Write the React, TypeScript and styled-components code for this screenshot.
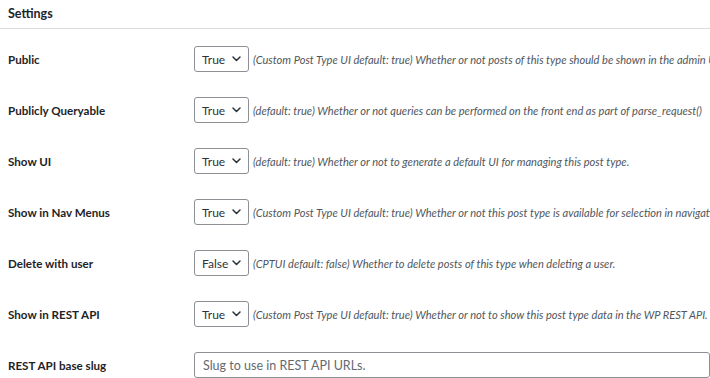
import React from 'react';
import styled, { createGlobalStyle } from 'styled-components';

const GlobalStyle = createGlobalStyle`
  body {
    margin: 0;
    background: #fff;
    overflow: hidden;
    font-family: Lato, "Open Sans", sans-serif;
    color: #1d2327;
  }
`;

const Panel = styled.div`
  width: 710px;
  height: 378px;
  overflow: hidden;
  background: #fff;
`;

const PanelTitle = styled.h2`
  margin: 0;
  padding: 6px 8px 6px;
  font-size: 12.5px;
  font-weight: 700;
  line-height: 16px;
  border-bottom: 1px solid #dcdcde;
`;

const Rows = styled.div`
  display: flex;
  flex-direction: column;
  padding-top: 17px;
  gap: 25px;
`;

const Row = styled.div`
  display: grid;
  grid-template-columns: 186px 1fr;
  align-items: center;
  padding-left: 8px;
  height: 26px;
`;

const Label = styled.label`
  font-size: 11.6px;
  font-weight: 700;
  color: #1d2327;
`;

const Field = styled.div`
  display: flex;
  align-items: center;
  gap: 4px;
  min-width: 0;
`;

const SelectBox = styled.div`
  box-sizing: border-box;
  width: 55px;
  height: 26px;
  flex: none;
  display: flex;
  align-items: center;
  justify-content: space-between;
  padding: 0 7px 0 7px;
  border: 1px solid #8c8f94;
  border-radius: 3px;
  font-size: 12px;
  color: #2c3338;
`;

const Description = styled.span`
  font-size: 11.1px;
  font-style: italic;
  color: #50575e;
  white-space: nowrap;
`;

const TextInput = styled.input`
  box-sizing: border-box;
  width: 560px;
  height: 26px;
  padding: 0 8px;
  border: 1px solid #8c8f94;
  border-radius: 3px;
  font-family: inherit;
  font-size: 12.5px;
  color: #2c3338;
  &::placeholder {
    color: #646970;
  }
`;

const Chevron = () => (
  <svg width="9" height="6" viewBox="0 0 9 6" fill="none">
    <path d="M1 1l3.5 3.5L8 1" stroke="#2c3338" strokeWidth="1.5" strokeLinecap="round" strokeLinejoin="round" />
  </svg>
);

type Setting = { label: string; value: string; desc: string };

const settings: Setting[] = [
  {
    label: 'Public',
    value: 'True',
    desc: '(Custom Post Type UI default: true) Whether or not posts of this type should be shown in the admin UI and is publicly queryable.',
  },
  {
    label: 'Publicly Queryable',
    value: 'True',
    desc: '(default: true) Whether or not queries can be performed on the front end as part of parse_request()',
  },
  {
    label: 'Show UI',
    value: 'True',
    desc: '(default: true) Whether or not to generate a default UI for managing this post type.',
  },
  {
    label: 'Show in Nav Menus',
    value: 'True',
    desc: '(Custom Post Type UI default: true) Whether or not this post type is available for selection in navigation menus.',
  },
  {
    label: 'Delete with user',
    value: 'False',
    desc: '(CPTUI default: false) Whether to delete posts of this type when deleting a user.',
  },
  {
    label: 'Show in REST API',
    value: 'True',
    desc: '(Custom Post Type UI default: true) Whether or not to show this post type data in the WP REST API.',
  },
];

export default function App() {
  return (
    <Panel>
      <GlobalStyle />
      <PanelTitle>Settings</PanelTitle>
      <Rows>
        {settings.map((s) => (
          <Row key={s.label}>
            <Label>{s.label}</Label>
            <Field>
              <SelectBox>
                <span>{s.value}</span>
                <Chevron />
              </SelectBox>
              <Description>{s.desc}</Description>
            </Field>
          </Row>
        ))}
        <Row>
          <Label>REST API base slug</Label>
          <Field>
            <TextInput placeholder="Slug to use in REST API URLs." />
          </Field>
        </Row>
      </Rows>
    </Panel>
  );
}
